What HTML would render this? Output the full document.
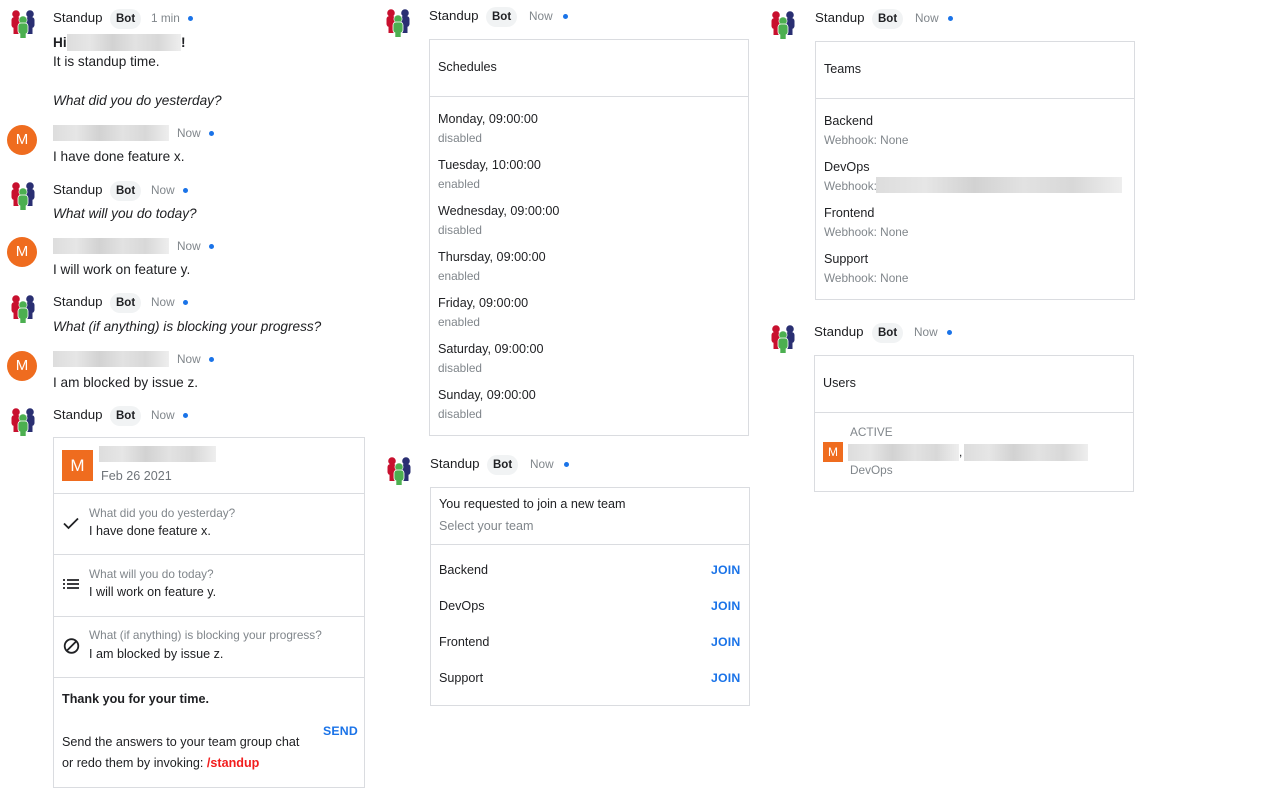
<!DOCTYPE html>
<html><head><meta charset="utf-8"><style>
*{margin:0;padding:0;box-sizing:border-box}
body{width:1280px;height:800px;background:#fff;position:relative;overflow:hidden;font-family:"Liberation Sans",Arial,sans-serif;color:#202124}
.t{position:absolute;line-height:20px;font-size:12.6px;white-space:nowrap}
.b{font-size:13.6px}
.n{font-size:13.3px;color:#202124}
.bot{position:absolute;font-size:11.5px;font-weight:bold;background:#f1f3f4;border-radius:10px;height:20px;line-height:20px;padding:0 6px}
.now{position:absolute;font-size:11.8px;color:#80868b;line-height:20px}
.dot{position:absolute;width:5px;height:5px;border-radius:50%;background:#1a73e8}
.g{color:#80868b;font-size:11.8px}
.card{position:absolute;border:1px solid #dadce0;background:#fff}
.hr{position:absolute;height:1px;background:#dadce0}
.blur{position:absolute;background:linear-gradient(90deg,#ddd,#e6e6e6 20%,#d2d2d2 40%,#e2e2e2 60%,#d8d8d8 80%,#eee)}
.mc{position:absolute;width:30px;height:30px;border-radius:50%;background:#ef6c1f;color:#fff;font-size:15px;text-align:center;line-height:30px}
.av{position:absolute}
.join{position:absolute;color:#1a73e8;font-size:12.3px;font-weight:bold;line-height:20px;letter-spacing:.2px}
</style></head><body>
<svg width="0" height="0" style="position:absolute"><defs>
<g id="grp">
<circle cx="6" cy="5" r="3.8" fill="#c8102e"/><rect x="1.5" y="8" width="9" height="11" rx="3" fill="#c8102e"/><rect x="3.5" y="17" width="5" height="8" fill="#c8102e"/>
<circle cx="20" cy="5" r="3.8" fill="#2a2f72"/><rect x="15.5" y="8" width="9" height="11" rx="3" fill="#2a2f72"/><rect x="17.5" y="17" width="5" height="8" fill="#2a2f72"/>
<circle cx="13" cy="11" r="4.4" fill="#fff"/><circle cx="13" cy="11" r="3.8" fill="#4caf50"/>
<rect x="8" y="14" width="10" height="11" rx="3" fill="#4caf50" stroke="#fff" stroke-width=".8"/><rect x="10.3" y="23" width="5.4" height="6" fill="#4caf50"/>
</g></defs></svg>

<!-- Column 1 -->
<svg class="av" style="left:10px;top:9px" width="27" height="30"><use href="#grp"/></svg>
<div class="t n" style="left:53px;top:8px">Standup</div><div class="bot" style="left:110px;top:9px">Bot</div><div class="now" style="left:151px;top:8px">1 min</div><div class="dot" style="left:188px;top:16px"></div>
<div class="t b" style="left:53px;top:33px;font-weight:bold">Hi</div><div class="blur" style="left:67px;top:34px;width:114px;height:17px"></div><div class="t b" style="left:181px;top:33px;font-weight:bold">!</div>
<div class="t b" style="left:53px;top:52px">It is standup time.</div>
<div class="t b" style="left:53px;top:91px;font-style:italic">What did you do yesterday?</div>

<div class="mc" style="left:7px;top:125px">M</div>
<div class="blur" style="left:53px;top:125px;width:116px;height:16px"></div><div class="now" style="left:177px;top:123px">Now</div><div class="dot" style="left:209px;top:131px"></div>
<div class="t b" style="left:53px;top:147px">I have done feature x.</div>

<svg class="av" style="left:10px;top:181px" width="27" height="30"><use href="#grp"/></svg>
<div class="t n" style="left:53px;top:180px">Standup</div><div class="bot" style="left:110px;top:181px">Bot</div><div class="now" style="left:151px;top:180px">Now</div><div class="dot" style="left:183px;top:188px"></div>
<div class="t b" style="left:53px;top:204px;font-style:italic">What will you do today?</div>

<div class="mc" style="left:7px;top:237px">M</div>
<div class="blur" style="left:53px;top:238px;width:116px;height:16px"></div><div class="now" style="left:177px;top:236px">Now</div><div class="dot" style="left:209px;top:244px"></div>
<div class="t b" style="left:53px;top:260px">I will work on feature y.</div>

<svg class="av" style="left:10px;top:294px" width="27" height="30"><use href="#grp"/></svg>
<div class="t n" style="left:53px;top:292px">Standup</div><div class="bot" style="left:110px;top:293px">Bot</div><div class="now" style="left:151px;top:292px">Now</div><div class="dot" style="left:183px;top:300px"></div>
<div class="t b" style="left:53px;top:317px;font-style:italic">What (if anything) is blocking your progress?</div>

<div class="mc" style="left:7px;top:351px">M</div>
<div class="blur" style="left:53px;top:351px;width:116px;height:16px"></div><div class="now" style="left:177px;top:349px">Now</div><div class="dot" style="left:209px;top:357px"></div>
<div class="t b" style="left:53px;top:373px">I am blocked by issue z.</div>

<svg class="av" style="left:10px;top:407px" width="27" height="30"><use href="#grp"/></svg>
<div class="t n" style="left:53px;top:405px">Standup</div><div class="bot" style="left:110px;top:406px">Bot</div><div class="now" style="left:151px;top:405px">Now</div><div class="dot" style="left:183px;top:413px"></div>

<div class="card" style="left:53px;top:437px;width:312px;height:351px"></div>
<div style="position:absolute;left:62px;top:450px;width:31px;height:31px;background:#ef6c1f;color:#fff;font-size:17px;text-align:center;line-height:31px">M</div>
<div class="blur" style="left:99px;top:446px;width:117px;height:16px"></div>
<div class="t" style="left:101px;top:466px;color:#70757a">Feb 26 2021</div>
<div class="hr" style="left:54px;top:493px;width:310px"></div>
<svg class="av" style="left:62px;top:514px" width="18" height="18"><path d="M2 9.5l4.5 4.5L16 4.5" stroke="#202124" stroke-width="1.8" fill="none"/></svg>
<div class="t g" style="left:89px;top:503px">What did you do yesterday?</div>
<div class="t" style="left:89px;top:521px">I have done feature x.</div>
<div class="hr" style="left:54px;top:554px;width:310px"></div>
<svg class="av" style="left:63px;top:578px" width="16" height="14"><path d="M0 2h2M4 2h12M0 6h2M4 6h12M0 10h2M4 10h12" stroke="#202124" stroke-width="1.8"/></svg>
<div class="t g" style="left:89px;top:564px">What will you do today?</div>
<div class="t" style="left:89px;top:582px">I will work on feature y.</div>
<div class="hr" style="left:54px;top:616px;width:310px"></div>
<svg class="av" style="left:63px;top:637px" width="18" height="18"><circle cx="8.5" cy="9" r="6.8" stroke="#202124" stroke-width="1.8" fill="none"/><path d="M3.8 13.8L13.3 4.3" stroke="#202124" stroke-width="1.8"/></svg>
<div class="t g" style="left:89px;top:625px">What (if anything) is blocking your progress?</div>
<div class="t" style="left:89px;top:644px">I am blocked by issue z.</div>
<div class="hr" style="left:54px;top:677px;width:310px"></div>
<div class="t" style="left:62px;top:689px;font-weight:bold">Thank you for your time.</div>
<div class="join" style="left:323px;top:721px">SEND</div>
<div class="t" style="left:62px;top:732px">Send the answers to your team group chat</div>
<div class="t" style="left:62px;top:753px">or redo them by invoking: <b style="color:#f21d1d">/standup</b></div>

<!-- Column 2 -->
<svg class="av" style="left:385px;top:8px" width="27" height="30"><use href="#grp"/></svg>
<div class="t n" style="left:429px;top:6px">Standup</div><div class="bot" style="left:486px;top:7px">Bot</div><div class="now" style="left:529px;top:6px">Now</div><div class="dot" style="left:563px;top:14px"></div>
<div class="card" style="left:429px;top:39px;width:320px;height:397px"></div>
<div class="t" style="left:438px;top:57px">Schedules</div>
<div class="hr" style="left:430px;top:96px;width:318px"></div>
<div class="t" style="left:438px;top:109px">Monday, 09:00:00</div><div class="t g" style="left:438px;top:128px">disabled</div>
<div class="t" style="left:438px;top:155px">Tuesday, 10:00:00</div><div class="t g" style="left:438px;top:174px">enabled</div>
<div class="t" style="left:438px;top:201px">Wednesday, 09:00:00</div><div class="t g" style="left:438px;top:220px">disabled</div>
<div class="t" style="left:438px;top:247px">Thursday, 09:00:00</div><div class="t g" style="left:438px;top:266px">enabled</div>
<div class="t" style="left:438px;top:293px">Friday, 09:00:00</div><div class="t g" style="left:438px;top:312px">enabled</div>
<div class="t" style="left:438px;top:339px">Saturday, 09:00:00</div><div class="t g" style="left:438px;top:358px">disabled</div>
<div class="t" style="left:438px;top:385px">Sunday, 09:00:00</div><div class="t g" style="left:438px;top:404px">disabled</div>

<svg class="av" style="left:386px;top:456px" width="27" height="30"><use href="#grp"/></svg>
<div class="t n" style="left:430px;top:454px">Standup</div><div class="bot" style="left:487px;top:455px">Bot</div><div class="now" style="left:530px;top:454px">Now</div><div class="dot" style="left:564px;top:462px"></div>
<div class="card" style="left:430px;top:487px;width:320px;height:219px"></div>
<div class="t" style="left:439px;top:494px">You requested to join a new team</div>
<div class="t g" style="left:439px;top:516px;font-size:12.6px">Select your team</div>
<div class="hr" style="left:431px;top:544px;width:318px"></div>
<div class="t" style="left:439px;top:560px">Backend</div><div class="join" style="left:711px;top:560px">JOIN</div>
<div class="t" style="left:439px;top:596px">DevOps</div><div class="join" style="left:711px;top:596px">JOIN</div>
<div class="t" style="left:439px;top:632px">Frontend</div><div class="join" style="left:711px;top:632px">JOIN</div>
<div class="t" style="left:439px;top:668px">Support</div><div class="join" style="left:711px;top:668px">JOIN</div>

<!-- Column 3 -->
<svg class="av" style="left:770px;top:10px" width="27" height="30"><use href="#grp"/></svg>
<div class="t n" style="left:815px;top:8px">Standup</div><div class="bot" style="left:872px;top:9px">Bot</div><div class="now" style="left:915px;top:8px">Now</div><div class="dot" style="left:948px;top:16px"></div>
<div class="card" style="left:815px;top:41px;width:320px;height:259px"></div>
<div class="t" style="left:824px;top:59px">Teams</div>
<div class="hr" style="left:816px;top:98px;width:318px"></div>
<div class="t" style="left:824px;top:111px">Backend</div><div class="t g" style="left:824px;top:130px">Webhook: None</div>
<div class="t" style="left:824px;top:157px">DevOps</div><div class="t g" style="left:824px;top:176px">Webhook:</div><div class="blur" style="left:876px;top:177px;width:246px;height:16px"></div>
<div class="t" style="left:824px;top:203px">Frontend</div><div class="t g" style="left:824px;top:222px">Webhook: None</div>
<div class="t" style="left:824px;top:249px">Support</div><div class="t g" style="left:824px;top:268px">Webhook: None</div>

<svg class="av" style="left:770px;top:324px" width="27" height="30"><use href="#grp"/></svg>
<div class="t n" style="left:814px;top:322px">Standup</div><div class="bot" style="left:872px;top:323px">Bot</div><div class="now" style="left:914px;top:322px">Now</div><div class="dot" style="left:947px;top:330px"></div>
<div class="card" style="left:814px;top:355px;width:320px;height:137px"></div>
<div class="t" style="left:823px;top:373px">Users</div>
<div class="hr" style="left:815px;top:412px;width:318px"></div>
<div style="position:absolute;left:823px;top:442px;width:20px;height:20px;background:#ef6c1f;color:#fff;font-size:12px;text-align:center;line-height:20px">M</div>
<div class="t g" style="left:850px;top:422px">ACTIVE</div>
<div class="blur" style="left:848px;top:444px;width:111px;height:17px"></div><div class="t g" style="left:959px;top:442px;color:#202124">,</div><div class="blur" style="left:964px;top:444px;width:124px;height:17px"></div>
<div class="t g" style="left:850px;top:460px">DevOps</div>
</body></html>
